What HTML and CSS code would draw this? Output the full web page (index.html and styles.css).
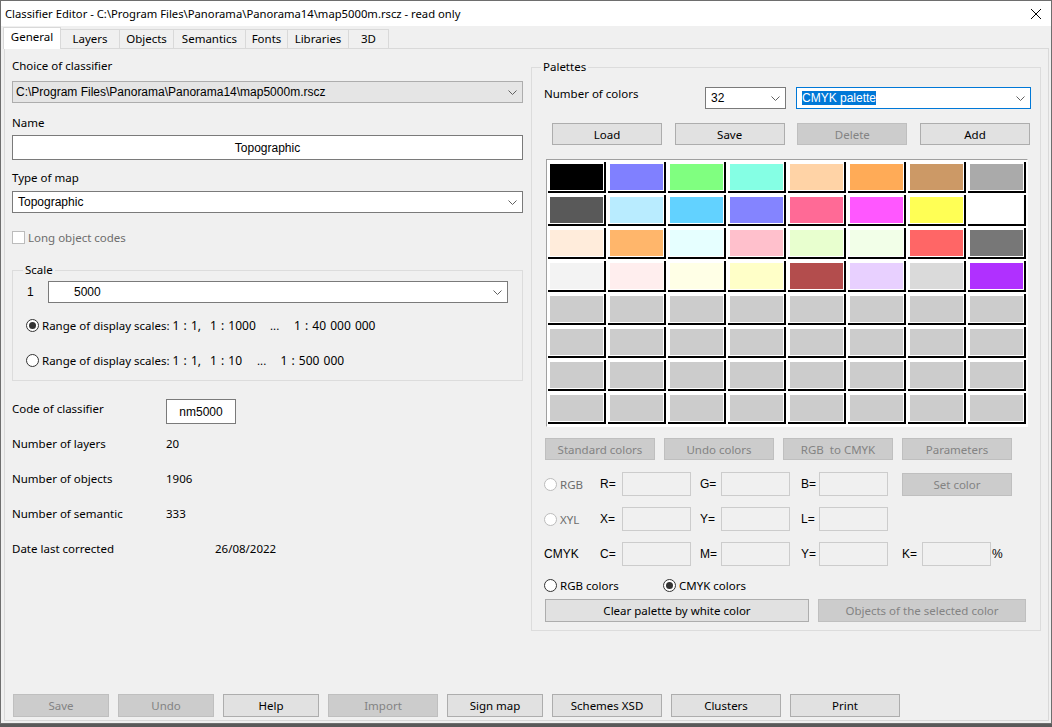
FILE: index.html
```html
<!DOCTYPE html>
<html>
<head>
<meta charset="utf-8">
<title>Classifier Editor</title>
<link rel="stylesheet" href="styles.css">
</head>
<body>
<div class="window">
  <div class="titlebar">
    <span class="title">Classifier Editor - C:\Program Files\Panorama\Panorama14\map5000m.rscz - read only</span>
    <svg class="close" width="10" height="10" viewBox="0 0 10 10"><path d="M0 0L10 10M10 0L0 10" stroke="#000" stroke-width="1" fill="none"/></svg>
  </div>
  <div class="tabs">
    <div class="tab active t-general">General</div>
    <div class="tab t-layers">Layers</div>
    <div class="tab t-objects">Objects</div>
    <div class="tab t-sem">Semantics</div>
    <div class="tab t-fonts">Fonts</div>
    <div class="tab t-libs">Libraries</div>
    <div class="tab t-3d">3D</div>
  </div>
  <div class="page">
    <div class="cols">
      <div class="left">
        <div class="lbl l-choice">Choice of classifier</div>
        <div class="combo ro c-choice"><span class="ms">C:\Program Files\Panorama\Panorama14\map5000m.rscz</span><svg class="chev" width="9" height="5" viewBox="0 0 9 5"><path d="M0.5 0.5L4.5 4.5L8.5 0.5" fill="none" stroke="#606060"/></svg></div>
        <div class="lbl l-name">Name</div>
        <div class="edit center e-name ms">Topographic</div>
        <div class="lbl l-type">Type of map</div>
        <div class="combo c-type"><span class="ms">Topographic</span><svg class="chev" width="9" height="5" viewBox="0 0 9 5"><path d="M0.5 0.5L4.5 4.5L8.5 0.5" fill="none" stroke="#606060"/></svg></div>
        <div class="check-row"><span class="checkbox"></span><span class="dis">Long object codes</span></div>
        <fieldset class="group scale">
          <legend>Scale</legend>
          <div class="scale-row"><span class="one ms">1</span><div class="combo c-scale"><span class="ms">5000</span><svg class="chev" width="9" height="5" viewBox="0 0 9 5"><path d="M0.5 0.5L4.5 4.5L8.5 0.5" fill="none" stroke="#606060"/></svg></div></div>
          <div class="radio-row r1"><span class="radio on"><i></i></span><span class="rg">Range of display scales: <span class="num">1 : 1,</span></span><span class="num rn1">1 : 1000</span><span class="rd1">...</span><span class="num">1 : 40 000 000</span></div>
          <div class="radio-row r2"><span class="radio"></span><span class="rg">Range of display scales: <span class="num">1 : 1,</span></span><span class="num rn2">1 : 10</span><span class="rd2">...</span><span class="num">1 : 500 000</span></div>
        </fieldset>
        <div class="info code"><span class="k">Code of classifier</span><div class="edit center e-code ms">nm5000</div></div>
        <div class="info i-first"><span class="k">Number of layers</span><span>20</span></div>
        <div class="info"><span class="k">Number of objects</span><span>1906</span></div>
        <div class="info"><span class="k">Number of semantic</span><span>333</span></div>
        <div class="info"><span class="k k-date">Date last corrected</span><span>26/08/2022</span></div>
      </div>

      <fieldset class="group palettes">
        <legend>Palettes</legend>
        <div class="p-row1">
          <span class="p-lbl">Number of colors</span>
          <div class="combo c-num"><span class="ms">32</span><svg class="chev" width="9" height="5" viewBox="0 0 9 5"><path d="M0.5 0.5L4.5 4.5L8.5 0.5" fill="none" stroke="#606060"/></svg></div>
          <div class="combo focus c-pal"><span class="ms sel">CMYK palette</span><svg class="chev" width="9" height="5" viewBox="0 0 9 5"><path d="M0.5 0.5L4.5 4.5L8.5 0.5" fill="none" stroke="#606060"/></svg></div>
        </div>
        <div class="p-btns1">
          <button class="btn">Load</button>
          <button class="btn">Save</button>
          <button class="btn off">Delete</button>
          <button class="btn">Add</button>
        </div>
        <div class="swatches">
          <div class="sw"><i style="background:#000000"></i></div>
          <div class="sw"><i style="background:#8080ff"></i></div>
          <div class="sw"><i style="background:#80ff80"></i></div>
          <div class="sw"><i style="background:#85ffe4"></i></div>
          <div class="sw"><i style="background:#ffd3a6"></i></div>
          <div class="sw"><i style="background:#ffab57"></i></div>
          <div class="sw"><i style="background:#cc9966"></i></div>
          <div class="sw"><i style="background:#aaaaaa"></i></div>

          <div class="sw"><i style="background:#595959"></i></div>
          <div class="sw"><i style="background:#b9ecff"></i></div>
          <div class="sw"><i style="background:#62d2ff"></i></div>
          <div class="sw"><i style="background:#8484ff"></i></div>
          <div class="sw"><i style="background:#ff6a96"></i></div>
          <div class="sw"><i style="background:#ff57ff"></i></div>
          <div class="sw"><i style="background:#ffff55"></i></div>
          <div class="sw"><i style="background:#ffffff"></i></div>

          <div class="sw"><i style="background:#ffecdb"></i></div>
          <div class="sw"><i style="background:#ffb66b"></i></div>
          <div class="sw"><i style="background:#e6ffff"></i></div>
          <div class="sw"><i style="background:#ffc0cc"></i></div>
          <div class="sw"><i style="background:#e8ffcf"></i></div>
          <div class="sw"><i style="background:#f2ffe8"></i></div>
          <div class="sw"><i style="background:#ff6666"></i></div>
          <div class="sw"><i style="background:#777777"></i></div>

          <div class="sw"><i style="background:#f3f3f3"></i></div>
          <div class="sw"><i style="background:#ffeeee"></i></div>
          <div class="sw"><i style="background:#ffffe6"></i></div>
          <div class="sw"><i style="background:#ffffc8"></i></div>
          <div class="sw"><i style="background:#b34d4d"></i></div>
          <div class="sw"><i style="background:#e8d0ff"></i></div>
          <div class="sw"><i style="background:#dadada"></i></div>
          <div class="sw"><i style="background:#b030ff"></i></div>

          <div class="sw"><i></i></div><div class="sw"><i></i></div><div class="sw"><i></i></div><div class="sw"><i></i></div>
          <div class="sw"><i></i></div><div class="sw"><i></i></div><div class="sw"><i></i></div><div class="sw"><i></i></div>
          <div class="sw"><i></i></div><div class="sw"><i></i></div><div class="sw"><i></i></div><div class="sw"><i></i></div>
          <div class="sw"><i></i></div><div class="sw"><i></i></div><div class="sw"><i></i></div><div class="sw"><i></i></div>
          <div class="sw"><i></i></div><div class="sw"><i></i></div><div class="sw"><i></i></div><div class="sw"><i></i></div>
          <div class="sw"><i></i></div><div class="sw"><i></i></div><div class="sw"><i></i></div><div class="sw"><i></i></div>
          <div class="sw"><i></i></div><div class="sw"><i></i></div><div class="sw"><i></i></div><div class="sw"><i></i></div>
          <div class="sw"><i></i></div><div class="sw"><i></i></div><div class="sw"><i></i></div><div class="sw"><i></i></div>
        </div>
        <div class="p-btns2">
          <button class="btn off">Standard colors</button>
          <button class="btn off">Undo colors</button>
          <button class="btn off">RGB&nbsp; to CMYK</button>
          <button class="btn off">Parameters</button>
        </div>
        <div class="crow c-first">
          <span class="ca"><span class="radio dim"></span><span class="dis">RGB</span></span>
          <span class="ms e1">R=</span><span class="box"></span>
          <span class="ms e2">G=</span><span class="box"></span>
          <span class="ms e3">B=</span><span class="box"></span>
          <button class="btn off setc">Set color</button>
        </div>
        <div class="crow">
          <span class="ca"><span class="radio dim"></span><span class="dis">XYL</span></span>
          <span class="ms e1">X=</span><span class="box"></span>
          <span class="ms e2">Y=</span><span class="box"></span>
          <span class="ms e3">L=</span><span class="box"></span>
        </div>
        <div class="crow">
          <span class="ca ms">CMYK</span>
          <span class="ms e1">C=</span><span class="box"></span>
          <span class="ms e2">M=</span><span class="box"></span>
          <span class="ms e3">Y=</span><span class="box"></span>
          <span class="ms e4">K=</span><span class="box"></span><span class="ms pct">%</span>
        </div>
        <div class="mode-row">
          <span class="m1"><span class="radio"></span><span>RGB colors</span></span>
          <span class="m2"><span class="radio on"><i></i></span><span>CMYK colors</span></span>
        </div>
        <div class="p-btns3">
          <button class="btn b-clear">Clear palette by white color</button>
          <button class="btn off b-obj">Objects of the selected color</button>
        </div>
      </fieldset>
    </div>

    <div class="bottombar">
      <button class="btn off w96">Save</button>
      <button class="btn off w96">Undo</button>
      <button class="btn w96">Help</button>
      <button class="btn off w110">Import</button>
      <button class="btn w96">Sign map</button>
      <button class="btn w110">Schemes XSD</button>
      <button class="btn w110">Clusters</button>
      <button class="btn w110">Print</button>
    </div>
  </div>
</div>
</body>
</html>
```

FILE: styles.css
```css
* { box-sizing: border-box; }
html, body { margin: 0; padding: 0; }
body {
  width: 1052px;
  height: 727px;
  overflow: hidden;
  background: #5a5a5a;
  font-family: "Noto Sans", sans-serif;
  font-size: 11.5px;
  color: #000;
}
.ms { font-family: "Liberation Sans", Arial, sans-serif; font-size: 12px; }
.dis { color: #6d6d6d; }

.window {
  width: 1052px;
  height: 724px;
  border: 1px solid #6e6e6e;
  background: #f0f0f0;
  display: flex;
  flex-direction: column;
}

/* title bar */
.titlebar {
  flex: none;
  height: 25px;
  background: #fff;
  display: flex;
  align-items: center;
  justify-content: space-between;
  padding: 0 10px 0 4px;
  font-size: 11.25px;
}
.title { padding-bottom: 1px; }
.close { display: block; }

/* tabs */
.tabs {
  flex: none;
  height: 22px;
  display: flex;
  align-items: flex-end;
  padding-left: 2px;
}
.tab {
  height: 19px;
  border: 1px solid #d9d9d9;
  border-bottom: none;
  margin-left: -1px;
  background: #f0f0f0;
  display: flex;
  align-items: center;
  justify-content: center;
  padding-bottom: 2px;
}
.tab.active {
  margin-left: 0;
  height: 22px;
  margin-bottom: -1px;
  background: #fff;
  padding-bottom: 4px;
  position: relative;
  z-index: 1;
}
.t-general { width: 58px; }
.t-layers { width: 60px; }
.t-objects { width: 55px; }
.t-sem { width: 73px; }
.t-fonts { width: 43px; }
.t-libs { width: 62px; }
.t-3d { width: 41px; }

/* page */
.page {
  flex: 1;
  margin: 0 2px 2px 3px;
  border: 1px solid #d9d9d9;
  display: flex;
  flex-direction: column;
}
.cols {
  display: flex;
  align-items: flex-start;
  gap: 8px;
  padding-left: 7px;
}

/* left column */
.left {
  width: 511px;
  padding-top: 9px;
}
.lbl { line-height: 16px; height: 16px; }
.l-name { margin-top: 12px; }
.l-type { margin-top: 10px; }

.combo {
  height: 22px;
  border: 1px solid #7a7a7a;
  background: #fff;
  display: flex;
  align-items: center;
  justify-content: space-between;
  padding: 0 5px 0 5px;
  white-space: nowrap;
}
.combo.ro { background: #e5e5e5; border-color: #adadad; padding-left: 3px; }
.combo.focus { border-color: #0078d7; }
.chev { display: block; flex: none; }
.c-choice { margin-top: 7px; }
.c-type { margin-top: 5px; }

.edit {
  border: 1px solid #7a7a7a;
  background: #fff;
  display: flex;
  align-items: center;
}
.edit.center { justify-content: center; }
.e-name { height: 25px; margin-top: 4px; }

.check-row {
  margin-top: 16px;
  height: 16px;
  display: flex;
  align-items: center;
  gap: 3px;
}
.checkbox {
  width: 13px;
  height: 13px;
  border: 1px solid #bcbcbc;
  background: #fff;
}

.group {
  margin: 0;
  padding: 0;
  border: 1px solid #dcdcdc;
  min-width: 0;
}
.group legend {
  padding: 0 2px;
  height: 16px;
  line-height: 16px;
}
.scale {
  margin-top: 17px;
  padding: 0 14px 12px 13px;
}
.scale legend { margin-left: -3px; }
.scale-row {
  margin-top: 3px;
  display: flex;
  align-items: center;
}
.one { width: 22px; padding-left: 1px; }
.c-scale { flex: 1; padding-left: 25px; }

.radio-row {
  height: 16px;
  display: flex;
  align-items: center;
  white-space: nowrap;
}
.radio-row .radio { margin-right: 3px; }
.r1 { margin-top: 14px; }
.r2 { margin-top: 19px; }
.num { font-size: 12px; word-spacing: 1px; }
.rg { width: 168px; flex: none; }
.rn1 { width: 60px; flex: none; }
.rd1 { width: 24px; flex: none; }
.rn2 { width: 47px; flex: none; }
.rd2 { width: 23.5px; flex: none; }

.radio {
  flex: none;
  width: 13px;
  height: 13px;
  border: 1px solid #333;
  border-radius: 50%;
  background: #fff;
  display: inline-flex;
  align-items: center;
  justify-content: center;
}
.radio i {
  display: block;
  width: 7px;
  height: 7px;
  border-radius: 50%;
  background: #333;
}
.radio.dim { border-color: #bcbcbc; }

.info {
  display: flex;
  align-items: flex-start;
  line-height: 16px;
  margin-top: 19px;
}
.info .k { width: 154px; flex: none; }
.info .k-date { width: 203px; }
.info.code { margin-top: 18px; }
.info.code .k { margin-top: 2px; }
.info.i-first { margin-top: 12px; }
.e-code { width: 70px; height: 25px; }

/* palettes */
.palettes {
  width: 510px;
  margin-top: 10px;
  padding: 0 0 8px 0;
}
.palettes legend { margin-left: 9px; }

.p-row1 {
  margin-top: 12px;
  padding-left: 12px;
  display: flex;
  align-items: flex-start;
}
.p-lbl { width: 161px; line-height: 14px; }
.c-num { width: 81px; }
.c-pal { width: 235px; margin-left: 10px; }
.sel { background: #0078d7; color: #fff; }

.btn {
  margin: 0;
  height: 22px;
  width: 110px;
  border: 1px solid #adadad;
  background: #e1e1e1;
  font-family: "Noto Sans", sans-serif;
  font-size: 11.5px;
  color: #000;
  padding: 0;
  display: flex;
  align-items: center;
  justify-content: center;
  white-space: nowrap;
}
.btn.off { background: #cccccc; border-color: #bfbfbf; color: #838383; }

.p-btns1 {
  margin-top: 14px;
  margin-left: 20px;
  width: 478px;
  display: flex;
  justify-content: space-between;
}

.swatches {
  margin: 14px 0 0 14px;
  width: 482px;
  border: 1px solid;
  border-color: #a0a0a0 #ffffff #ffffff #a0a0a0;
  background: #fff;
  padding: 2px 1px 2px 1px;
  display: grid;
  grid-template-columns: repeat(8, 58px);
  grid-auto-rows: 31px;
  gap: 2px;
}
.sw {
  border-right: 2px solid #000;
  border-bottom: 2px solid #000;
  padding: 2px 1px 1px 2px;
}
.sw i {
  display: block;
  height: 100%;
  background: #cccccc;
}

.p-btns2 {
  margin-top: 11px;
  margin-left: 13px;
  display: flex;
  gap: 9px;
}

.crow {
  margin-top: 11px;
  padding-left: 12px;
  height: 24px;
  display: flex;
  align-items: center;
}
.crow.c-first { margin-top: 12px; }
.ca { width: 56px; display: flex; align-items: center; gap: 3px; }
.e1 { width: 22px; }
.e2 { width: 21px; margin-left: 9px; }
.e3 { width: 18px; margin-left: 11px; }
.e4 { width: 20px; margin-left: 14px; }
.box {
  width: 69px;
  height: 24px;
  border: 1px solid #cccccc;
  background: #f0f0f0;
}
.setc { margin-left: 14px; height: 23px; }
.pct { margin-left: 1px; }

.mode-row {
  margin-top: 11px;
  padding-left: 12px;
  height: 16px;
  display: flex;
  align-items: center;
}
.m1, .m2 { display: flex; align-items: center; gap: 3px; }
.m1 { width: 119px; }

.p-btns3 {
  margin-top: 6px;
  margin-left: 13px;
  display: flex;
  gap: 9px;
}
.p-btns3 .btn { height: 23px; }
.b-clear { width: 264px; }
.b-obj { width: 208px; }

/* bottom bar */
.bottombar {
  margin-top: auto;
  padding: 0 0 3px 8px;
  display: flex;
  gap: 9px;
}
.bottombar .btn { height: 23px; }
.w96 { width: 96px; }
.w110 { width: 110px; }
```
